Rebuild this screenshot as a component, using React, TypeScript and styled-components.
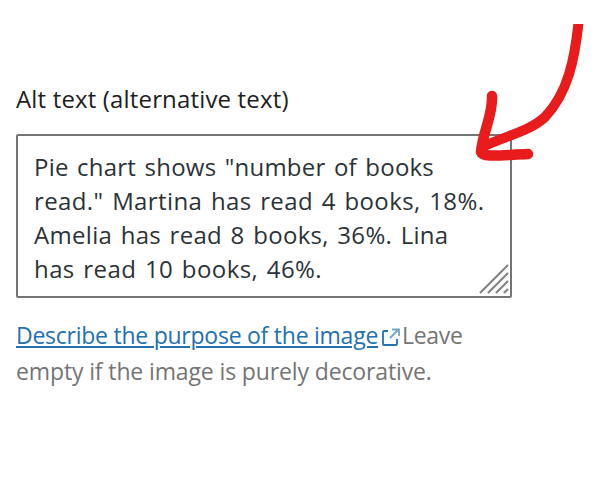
import React from 'react';
import styled, { createGlobalStyle } from 'styled-components';

const GlobalStyle = createGlobalStyle`
  * { box-sizing: border-box; }
  body { margin: 0; background: #fff; overflow: hidden; }
`;

const Page = styled.main`
  position: relative;
  width: 595px;
  height: 477px;
  padding: 82px 0 0 16px;
  background: #fff;
  font-family: 'Open Sans', 'Noto Sans', sans-serif;
`;

const Label = styled.label`
  display: block;
  height: 52px;
  font-size: 24px;
  line-height: 34px;
  letter-spacing: 0.16px;
  color: #1e1e1e;
  white-space: nowrap;
`;

const TextBox = styled.div`
  position: relative;
  width: 496px;
  height: 164px;
  padding: 14px 0 0 16px;
  border: 2px solid #757575;
  border-radius: 2px;
`;

const Line = styled.div<{ $spacing: number }>`
  height: 34px;
  font-size: 24px;
  line-height: 34px;
  letter-spacing: ${(p) => p.$spacing}px;
  word-spacing: 2px;
  color: #2c3338;
  white-space: nowrap;
`;

const ResizeGrip = styled.svg`
  position: absolute;
  right: 1px;
  bottom: 2px;
`;

const Help = styled.div`
  padding-top: 19px;
  font-size: 23px;
  color: #757575;
`;

const HelpRow = styled.div`
  display: flex;
  height: 36px;
  line-height: 36px;
  letter-spacing: -0.13px;
  white-space: nowrap;
`;

const HelpLink = styled.a`
  width: 362px;
  letter-spacing: -0.25px;
  color: #2271b1;
  text-decoration: underline;
  text-decoration-thickness: 2px;
  text-underline-offset: 2px;
`;

const ExternalIcon = styled.svg`
  flex: none;
  margin: 9px 1px 0 3px;
`;

const HelpWord = styled.span`
  letter-spacing: -0.3px;
`;

const Arrow = styled.svg`
  position: absolute;
  left: 465px;
  top: 24px;
`;

const lines = [
  { text: 'Pie chart shows "number of books', spacing: 0.22 },
  { text: 'read." Martina has read 4 books, 18%.', spacing: 0.39 },
  { text: 'Amelia has read 8 books, 36%. Lina', spacing: 0.3 },
  { text: 'has read 10 books, 46%.', spacing: 0.41 },
];

export default function App() {
  return (
    <Page>
      <GlobalStyle />
      <Label>Alt text (alternative text)</Label>
      <TextBox>
        {lines.map((line) => (
          <Line key={line.text} $spacing={line.spacing}>{line.text}</Line>
        ))}
        <ResizeGrip width="30" height="30" viewBox="0 0 30 30" fill="none" stroke="#858585" strokeWidth="2.2">
          <path d="M1 29 29 1M9 29 29 9M17 29 29 17M25 29 29 25" />
        </ResizeGrip>
      </TextBox>
      <Help>
        <HelpRow>
          <HelpLink>Describe the purpose of the image</HelpLink>
          <ExternalIcon width="20" height="21" viewBox="0 0 20 21" fill="none" stroke="#2271b1" strokeWidth="1.8">
            <path d="M7 5H3Q2 5 2 6V18Q2 19 3 19H15Q16 19 16 18V13" />
            <path d="M9 12 17 4M11 3.5H18V10" strokeOpacity=".65" />
          </ExternalIcon>
          <HelpWord>Leave</HelpWord>
        </HelpRow>
        <HelpRow>empty if the image is purely decorative.</HelpRow>
      </Help>
      <Arrow width="130" height="142" viewBox="0 0 130 142" fill="none" stroke="#e81c1c" strokeLinecap="round" strokeLinejoin="round">
        <path d="M114-6C110 35 103 69 80 93C65 107 43 111 17 123" strokeWidth="10" />
        <path d="M27 72C28 91 18 107 16 128C18 134 37 131 63 130" strokeWidth="10.5" />
      </Arrow>
    </Page>
  );
}
